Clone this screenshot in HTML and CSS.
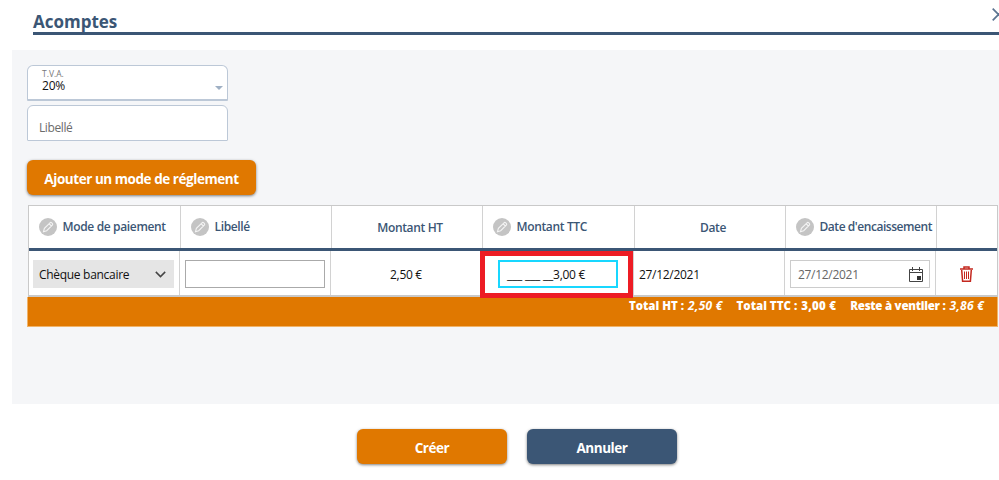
FILE: index.html
```html
<!DOCTYPE html>
<html lang="fr">
<head>
  <meta charset="UTF-8" />
  <title>Acomptes</title>
  <meta name="viewport" content="width=device-width, initial-scale=1.0" />
  <link rel="stylesheet" href="styles.css">
</head>
<body>

  <svg width="0" height="0" class="defs">
    <symbol id="pencil" viewBox="0 0 18 18">
      <circle cx="9" cy="9" r="9" fill="#c4c4c4"/>
      <path d="M4.500 13.700l.9-3.300 5.600-5.600c.5-.5 1.200-.5 1.700 0l.6.6c.5.5.5 1.200 0 1.700l-5.600 5.600zM10.200 5.800l2.200 2.200" fill="none" stroke="#f4f4f4" stroke-width="1.100"/>
    </symbol>
  </svg>

  <!-- Titre -->
  <div class="header">
    <h1>Acomptes</h1>
    <svg class="close" width="13" height="13" viewBox="0 0 13 13"><path d="M.7.7l11.600 11.600M12.300.7L.7 12.300" stroke="#5b7491" stroke-width="1.700"/></svg>
  </div>

  <div class="panel">
    <div class="field">
      <span class="field-label">T.V.A.</span>
      <span class="field-value">20%</span>
      <span class="arrow"></span>
    </div>
    <div class="field empty"><span class="placeholder">Libellé</span></div>

    <button class="btn add"><span>Ajouter un mode de réglement</span></button>

    <!-- Tableau des règlements -->
    <div class="table">
      <div class="row head">
        <div class="th"><svg class="pen"><use href="#pencil"/></svg><span>Mode de paiement</span></div>
        <div class="th"><svg class="pen"><use href="#pencil"/></svg><span>Libellé</span></div>
        <div class="th center"><span>Montant HT</span></div>
        <div class="th"><svg class="pen"><use href="#pencil"/></svg><span>Montant TTC</span></div>
        <div class="th center"><span>Date</span></div>
        <div class="th"><svg class="pen"><use href="#pencil"/></svg><span class="long">Date d'encaissement</span></div>
        <div class="th"></div>
      </div>
      <div class="row body">
        <div class="td">
          <div class="select"><span>Chèque bancaire</span>
            <svg width="11" height="7" viewBox="0 0 11 7"><path d="M.8.9l4.700 4.700L10.200.9" fill="none" stroke="#444" stroke-width="1.500"/></svg>
          </div>
        </div>
        <div class="td"><div class="input"></div></div>
        <div class="td center"><span>2,50 €</span></div>
        <div class="td amount">
          <div class="input focus"><span class="mask">___ ___ __</span><span>3,00 €</span></div>
          <div class="highlight"></div>
        </div>
        <div class="td date"><span>27/12/2021</span></div>
        <div class="td">
          <div class="input picker"><span>27/12/2021</span>
            <svg width="14" height="15" viewBox="0 0 14 15"><path d="M.5 2.500h13v12H.5zM.5 5.500h13M3.500 0v4M10.500 0v4" fill="none" stroke="#444"/><path d="M8 9h4v4H8z" fill="#333"/></svg>
          </div>
        </div>
        <div class="td center">
          <svg class="trash" width="13" height="16" viewBox="0 0 13 16"><path d="M0 3h13M4 2.800V.9h5v1.900M1.700 4l.9 11.200h7.800L11.300 4" fill="none" stroke="#c4281f" stroke-width="1.500"/><path d="M4.500 5.500v7.500M6.500 5.500v7.500M8.500 5.500v7.500" stroke="#c4281f"/></svg>
        </div>
      </div>
    </div>
    <div class="totals">
      <div><b class="ht">Total HT :</b><i>2,50 €</i></div>
      <div><b>Total TTC :</b><b class="sum">3,00 €</b></div>
      <div><b class="rest">Reste à ventiler :</b><i>3,86 €</i></div>
    </div>
  </div>

  <div class="actions">
    <button class="btn"><span>Créer</span></button>
    <button class="btn cancel"><span>Annuler</span></button>
  </div>

</body>
</html>
```

FILE: styles.css
```css
* {
  box-sizing: border-box;
}

body {
  margin: 0;
  height: 480px;
  overflow: hidden;
  background: #fff;
  font-family: "Open Sans", "Noto Sans", sans-serif;
  font-size: 12px;
  color: #111;
}

span, b, i {
  white-space: nowrap;
}

.defs {
  position: absolute;
}

.header {
  position: relative;
  height: 35px;
  margin-left: 33px;
  border-bottom: 3px solid #3b5675;
}

.header h1 {
  margin: 0;
  padding-top: 10px;
  font-size: 17px;
  line-height: 24px;
  font-weight: 700;
  color: #3b5675;
}

.close {
  position: absolute;
  top: 8px;
  right: -6px;
}

.panel {
  height: 354px;
  margin: 15px 0 0 12px;
  padding: 15px 1px 0 15px;
  background: #f5f6f8;
}

.field {
  position: relative;
  display: flex;
  flex-direction: column;
  width: 201px;
  height: 36px;
  margin-bottom: 4px;
  padding: 3px 0 0 14px;
  background: #fff;
  border: 1px solid #bcc8d7;
  border-bottom-width: 2px;
  border-radius: 6px 6px 1px 1px;
}

.field-label {
  font-size: 8.5px;
  line-height: 9px;
  color: #777;
}

.field-value {
  line-height: 15px;
  letter-spacing: -0.2px;
}

.arrow {
  position: absolute;
  right: 4px;
  top: 20px;
  border: 4px solid transparent;
  border-top-color: #9fb0c4;
  border-bottom: 0;
}

.field.empty {
  padding: 13px 0 0 11px;
  border-bottom-width: 1px;
}

.placeholder {
  line-height: 18px;
  color: #6c6c6c;
  letter-spacing: -0.4px;
}

.btn {
  display: flex;
  align-items: center;
  justify-content: center;
  width: 150px;
  height: 35px;
  padding: 3px 0 0;
  border: 0;
  border-radius: 6px;
  background: #e07800;
  box-shadow: 0 1px 3px rgba(0, 0, 0, 0.5);
  color: #fff;
  font-family: inherit;
  font-size: 13.5px;
  font-weight: 700;
  letter-spacing: -0.45px;
}

.btn.add {
  width: 229px;
  margin-top: 19px;
}

.table {
  width: 970px;
  height: 92px;
  margin: 10px 0 0 1px;
  background: #fff;
  border: 1px solid #c9c9c9;
  border-bottom-width: 2px;
}

.row {
  display: grid;
  grid-template-columns: 152px 151px 151px 152px 151px 151px 1fr;
}

.head {
  height: 45px;
  border-bottom: 3px solid #3b5675;
}

.th {
  display: flex;
  align-items: center;
  padding-left: 10px;
  border-right: 1px solid #d2d2d2;
  color: #3b5675;
  font-weight: 600;
  letter-spacing: -0.35px;
}

.th span {
  padding-bottom: 1px;
}

.th .long {
  letter-spacing: -0.45px;
}

.pen {
  flex: none;
  width: 18px;
  height: 18px;
  margin-right: 5.5px;
}

.th.center {
  justify-content: center;
  padding: 2px 0 0 6px;
}

.body {
  grid-template-columns: 151px 151px 151px 152px 151px 151px 1fr;
  height: 44px;
}

.td {
  display: flex;
  align-items: center;
  padding: 2px 0 0 5px;
  border-right: 1px solid #d2d2d2;
}

.th:last-child, .td:last-child {
  border-right: 0;
}

.td.center {
  justify-content: center;
  padding-left: 0;
}

.td span {
  letter-spacing: -0.3px;
}

.td .mask {
  letter-spacing: -0.22px;
}

.select {
  display: flex;
  align-items: center;
  justify-content: space-between;
  width: 141px;
  height: 28px;
  margin-left: -1px;
  padding: 0 8px 0 6px;
  background: #e5e5e5;
}

.input {
  display: flex;
  align-items: center;
  width: 140px;
  height: 28px;
  background: #fff;
  border: 1px solid #aaa;
}

.amount {
  position: relative;
  padding-left: 16px;
}

.input.focus {
  width: 120px;
  padding-left: 7px;
  border: 2px solid #18d7ff;
}

.highlight {
  position: absolute;
  left: -2px;
  top: 0;
  width: 153px;
  height: 47px;
  border: 5px solid #ed1c24;
}

.picker {
  justify-content: space-between;
  padding: 0 6px 0 7px;
  border-color: #ccc;
  color: #666;
}

.totals {
  display: flex;
  justify-content: flex-end;
  width: 971px;
  height: 30px;
  padding-right: 13px;
  gap: 14px;
  background: #e07800;
  border: 1px solid #f0b369;
  border-top: 0;
  color: #fff;
  font-size: 11.5px;
  line-height: 17px;
  font-weight: 700;
}

.totals div {
  display: flex;
  gap: 4px;
}

.totals b {
  letter-spacing: 0;
}

.totals .rest {
  letter-spacing: -0.25px;
}

.totals .sum, .totals i {
  letter-spacing: 0.25px;
}

.totals i {
  font-size: 12px;
}

.actions {
  display: flex;
  gap: 20px;
  margin: 25px 0 0 357px;
}

.btn.cancel {
  background: #3b5675;
}
```
